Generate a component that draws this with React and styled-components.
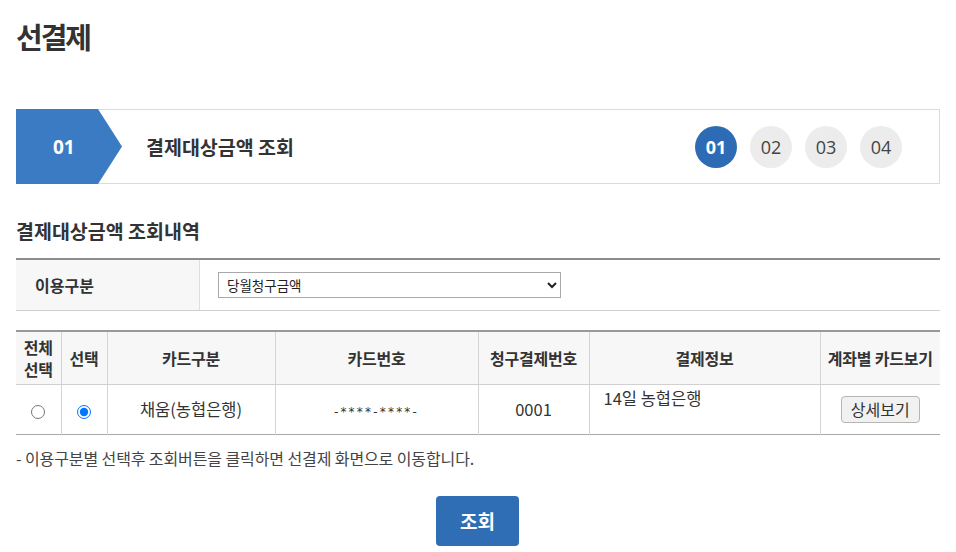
import React from "react";
import styled, { createGlobalStyle } from "styled-components";

const Global = createGlobalStyle`
  html, body { margin: 0; padding: 0; background: #fff; }
  body { font-family: "Noto Sans CJK KR", "Noto Sans", sans-serif; color: #333; }
  * { box-sizing: border-box; }
`;

const Page = styled.div`
  width: 956px;
  padding: 18px 16px 0;
`;

const Title = styled.h1`
  margin: 0;
  font-size: 29px;
  line-height: 36px;
  font-weight: 700;
  letter-spacing: -2px;
  color: #333;
`;

const StepBox = styled.div`
  margin-top: 55px;
  height: 75px;
  border: 1px solid #dcdcdc;
  display: flex;
  align-items: center;
`;

const Chevron = styled.div`
  width: 106px;
  align-self: stretch;
  margin: -1px 0 -1px -1px;
  background: #3a7bc3;
  clip-path: polygon(0 0, 82px 0, 106px 50%, 82px 100%, 0 100%);
  display: flex;
  align-items: center;
  padding-left: 37px;
  color: #fff;
  font-family: "Open Sans", "Noto Sans", sans-serif;
  font-weight: 700;
  font-size: 19px;
`;

const StepTitle = styled.div`
  margin-left: 24px;
  font-size: 19.5px;
  font-weight: 700;
  color: #333;
  flex: 1;
`;

const Dots = styled.div`
  display: flex;
  gap: 13px;
  margin-right: 37px;
`;

const Dot = styled.div`
  width: 42px;
  height: 42px;
  border-radius: 50%;
  display: flex;
  align-items: center;
  justify-content: center;
  font-family: "Open Sans", "Noto Sans", sans-serif;
  font-size: 18px;
  font-weight: ${(p) => (p.$active ? 700 : 400)};
  background: ${(p) => (p.$active ? "#2d6cb5" : "#ececec")};
  color: ${(p) => (p.$active ? "#fff" : "#444")};
`;

const SectionTitle = styled.h2`
  margin: 34px 0 0;
  font-size: 19.5px;
  line-height: 26px;
  font-weight: 700;
  color: #333;
`;

const FilterRow = styled.div`
  margin-top: 14px;
  border-top: 2px solid #8c8c8c;
  border-bottom: 1px solid #cfcfcf;
  display: flex;
  height: 53px;
`;

const FilterLabel = styled.div`
  width: 184px;
  background: #f7f7f7;
  border-right: 1px solid #dedede;
  display: flex;
  align-items: center;
  padding-left: 19px;
  font-size: 16px;
  font-weight: 600;
  color: #333;
`;

const FilterValue = styled.div`
  display: flex;
  align-items: center;
  padding-left: 18px;
`;

const Select = styled.select`
  width: 343px;
  height: 26px;
  border: 1px solid #a9a9a9;
  border-radius: 0;
  background: #fff;
  font-family: "Noto Sans CJK KR", sans-serif;
  font-size: 13.5px;
  color: #222;
  padding: 0 4px;
`;

const Table = styled.table`
  margin-top: 19px;
  width: 924px;
  border-collapse: collapse;
  table-layout: fixed;
  border-top: 2px solid #999;
  border-bottom: 1px solid #a8a8a8;
`;

const Th = styled.th`
  height: 53px;
  background: #f7f7f8;
  border-bottom: 1px solid #d0d0d0;
  border-left: 1px solid #d4d4d4;
  &:first-child { border-left: none; }
  font-size: 16px;
  font-weight: 600;
  letter-spacing: -0.2px;
  line-height: 22px;
  color: #333;
  padding: 0 2px;
`;

const Td = styled.td`
  height: 50px;
  border-left: 1px solid #d4d4d4;
  &:first-child { border-left: none; }
  text-align: ${(p) => p.$align || "center"};
  vertical-align: ${(p) => p.$valign || "middle"};
  padding: ${(p) => (p.$valign === "top" ? "1px 14px 0" : "0")};
  font-size: 16.5px;
  color: #333;
`;

const Masked = styled.span`
  font-family: "DejaVu Sans", sans-serif;
  font-size: 12px;
  letter-spacing: 2.2px;
  color: #333;
`;

const Radio = styled.input`
  width: 14px;
  height: 14px;
  margin: 0;
  vertical-align: middle;
`;

const DetailButton = styled.button`
  font-family: "Noto Sans CJK KR", sans-serif;
  font-size: 16px;
  color: #333;
  background: #f1f1f1;
  border: 1px solid #b5b5b5;
  border-radius: 4px;
  padding: 0 9px;
  height: 27px;
  line-height: 25px;
`;

const Note = styled.p`
  margin: 12px 0 0;
  font-size: 16px;
  line-height: 22px;
  letter-spacing: -0.1px;
  color: #444;
`;

const Actions = styled.div`
  display: flex;
  justify-content: center;
  margin-top: 27px;
  padding-right: 1px;
`;

const SearchButton = styled.button`
  width: 83px;
  height: 50px;
  border: none;
  border-radius: 4px;
  background: #2f6db5;
  color: #fff;
  font-family: "Noto Sans CJK KR", sans-serif;
  font-size: 19px;
  font-weight: 700;
`;

const cols = [45, 46, 168, 203, 111, 231, 120];

export default function App() {
  return (
    <>
      <Global />
      <Page>
        <Title>선결제</Title>
        <StepBox>
          <Chevron>01</Chevron>
          <StepTitle>결제대상금액 조회</StepTitle>
          <Dots>
            <Dot $active>01</Dot>
            <Dot>02</Dot>
            <Dot>03</Dot>
            <Dot>04</Dot>
          </Dots>
        </StepBox>
        <SectionTitle>결제대상금액 조회내역</SectionTitle>
        <FilterRow>
          <FilterLabel>이용구분</FilterLabel>
          <FilterValue>
            <Select defaultValue="a">
              <option value="a">당월청구금액</option>
            </Select>
          </FilterValue>
        </FilterRow>
        <Table>
          <colgroup>
            {cols.map((w, i) => (
              <col key={i} style={{ width: w }} />
            ))}
          </colgroup>
          <thead>
            <tr>
              <Th>전체<br />선택</Th>
              <Th>선택</Th>
              <Th>카드구분</Th>
              <Th>카드번호</Th>
              <Th>청구결제번호</Th>
              <Th>결제정보</Th>
              <Th>계좌별 카드보기</Th>
            </tr>
          </thead>
          <tbody>
            <tr>
              <Td><Radio type="radio" name="all" /></Td>
              <Td><Radio type="radio" name="sel" defaultChecked /></Td>
              <Td>채움(농협은행)</Td>
              <Td><Masked>-****-****-</Masked></Td>
              <Td>0001</Td>
              <Td $align="left" $valign="top">14일 농협은행</Td>
              <Td><DetailButton>상세보기</DetailButton></Td>
            </tr>
          </tbody>
        </Table>
        <Note>- 이용구분별 선택후 조회버튼을 클릭하면 선결제 화면으로 이동합니다.</Note>
        <Actions>
          <SearchButton>조회</SearchButton>
        </Actions>
      </Page>
    </>
  );
}
